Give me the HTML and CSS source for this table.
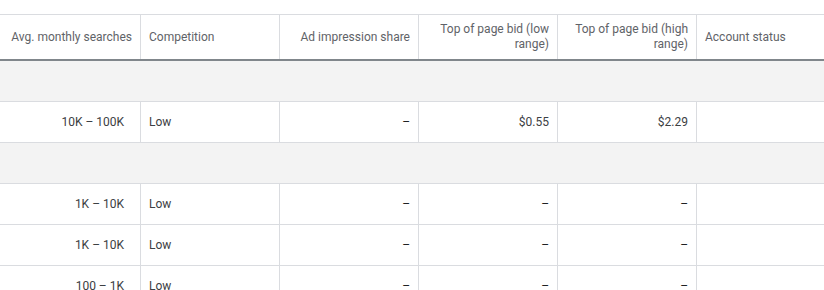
FILE: index.html
```html
<!DOCTYPE html>
<html>
<head>
<meta charset="utf-8">
<link rel="stylesheet" href="styles.css">
</head>
<body>
<div class="table">
  <div class="row head">
    <div class="cell num">Avg. monthly searches</div>
    <div class="cell">Competition</div>
    <div class="cell num">Ad impression share</div>
    <div class="cell num">Top of page bid (low range)</div>
    <div class="cell num">Top of page bid (high range)</div>
    <div class="cell last">Account status</div>
  </div>
  <div class="group"></div>
  <div class="row">
    <div class="cell num first">10K – 100K</div>
    <div class="cell">Low</div>
    <div class="cell num dash">–</div>
    <div class="cell num">$0.55</div>
    <div class="cell num">$2.29</div>
    <div class="cell last"></div>
  </div>
  <div class="group"></div>
  <div class="row">
    <div class="cell num first">1K – 10K</div>
    <div class="cell">Low</div>
    <div class="cell num dash">–</div>
    <div class="cell num dash">–</div>
    <div class="cell num dash">–</div>
    <div class="cell last"></div>
  </div>
  <div class="row">
    <div class="cell num first">1K – 10K</div>
    <div class="cell">Low</div>
    <div class="cell num dash">–</div>
    <div class="cell num dash">–</div>
    <div class="cell num dash">–</div>
    <div class="cell last"></div>
  </div>
  <div class="row">
    <div class="cell num first">100 – 1K</div>
    <div class="cell">Low</div>
    <div class="cell num dash">–</div>
    <div class="cell num dash">–</div>
    <div class="cell num dash">–</div>
    <div class="cell last"></div>
  </div>
</div>
</body>
</html>
```
FILE: styles.css
```css
html, body {
  margin: 0;
  padding: 0;
  background: #fff;
}
body {
  font-family: Roboto, "Liberation Sans", sans-serif;
  font-size: 12px;
  color: #3c4043;
  overflow: hidden;
}
.table {
  margin-top: 14px;
  border-top: 1px solid #dadce0;
  width: 824px;
}
.row {
  display: grid;
  grid-template-columns: 141px 139px 139px 139px 139px 1fr;
  height: 41px;
  border-bottom: 1px solid #dadce0;
  box-sizing: border-box;
}
.row.head {
  height: 46px;
  border-bottom: 2px solid #80868b;
  color: #5f6368;
  line-height: 15px;
}
.cell {
  border-right: 1px solid #dadce0;
  padding: 0 8px;
  display: flex;
  align-items: center;
  box-sizing: border-box;
}
.cell.num {
  justify-content: flex-end;
  text-align: right;
}
.cell.first {
  padding-right: 16px;
}
.cell.last {
  border-right: none;
}
.dash {
  color: #202124;
}
.group {
  height: 41px;
  background: #f3f3f3;
  border-bottom: 1px solid #dadce0;
  box-sizing: border-box;
}
```
